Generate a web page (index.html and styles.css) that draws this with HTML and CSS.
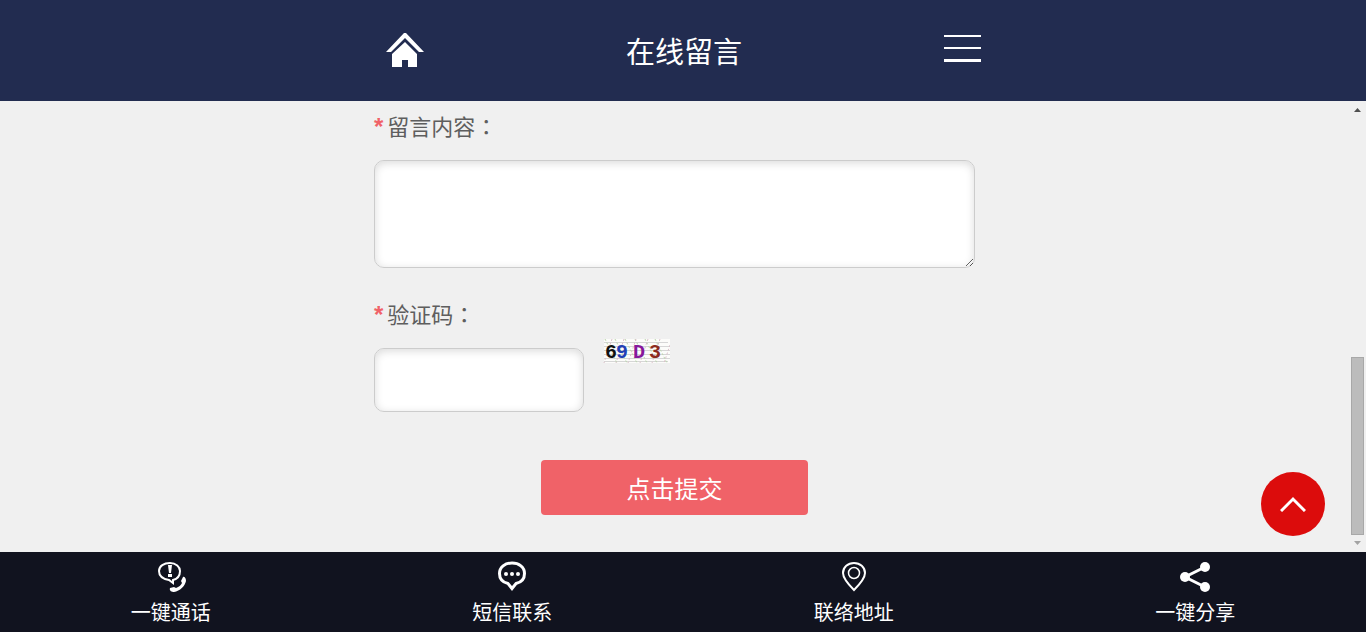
FILE: index.html
```html
<!DOCTYPE html>
<html lang="zh-CN">
<head>
    <meta charset="utf-8">
    <meta name="viewport" content="width=device-width, initial-scale=1">
    <title>在线留言</title>
    <link rel="stylesheet" href="styles.css">
</head>
<body>
    <header class="header">
        <div class="header-inner">
            <a class="header-icon" href="#" aria-label="首页">
                <svg width="38" height="36" viewBox="0 0 38 36" fill="#fff">
                    <path d="M18 0h2l18 19h-5L19 5 5 19H0z"/>
                    <path d="M19 9l12 12v13h-9v-7h-6v7H6V21z"/>
                </svg>
            </a>
            <h1>在线留言</h1>
            <button class="header-icon" type="button" aria-label="菜单">
                <svg width="37" height="36" viewBox="0 0 37 36" fill="#fff">
                    <path d="M0 2h37v2H0zM0 14h37v2H0zM0 26h37v3H0z"/>
                </svg>
            </button>
        </div>
    </header>

    <main class="main">
        <form class="form">
            <label for="content"><span class="required">*</span>留言内容<span class="colon" lang="zh-TW">：</span></label>
            <textarea id="content"></textarea>

            <label for="code"><span class="required">*</span>验证码<span class="colon" lang="zh-TW">：</span></label>
            <div class="code-row">
                <input type="text" id="code">
                <svg class="captcha" width="68" height="24" viewBox="0 0 68 24" role="img">
                    <rect x="2" width="66" height="24" fill="#fcfcfa"/>
                    <path d="M2 3.500h64M2 7.500h66M2 11.500h66M2 15.500h66M2 19.500h66M2 22.500h64" stroke="#d6d6d6"/>
                    <path d="M3 0l12 24M13 0l12 24M23 0l12 24M33 0l12 24M43 0l12 24M53 0l12 24" stroke="#b9d6ab" stroke-dasharray="2 2"/>
                    <path d="M10 0L2 24M22 0l-8 24M34 0l-8 24M46 0l-8 24M58 0l-8 24M68 6l-6 18" stroke="#dcc0ca" stroke-dasharray="2 2"/>
                    <text class="captcha-text" y="19"><tspan x="3" fill="#111">6</tspan><tspan x="14" fill="#2340b4">9</tspan><tspan x="31" fill="#86189c">D</tspan><tspan x="47" fill="#8c2a20">3</tspan></text>
                </svg>
            </div>

            <button class="submit" type="button">点击提交</button>
        </form>

        <div class="scrollbar" aria-hidden="true">
            <svg width="13" height="17" viewBox="0 0 13 17"><path d="M3 11h7L6.500 7z" fill="#505050"/></svg>
            <div class="thumb"></div>
            <svg width="13" height="17" viewBox="0 0 13 17"><path d="M3 6h7L6.500 10z" fill="#a3a3a3"/></svg>
        </div>
    </main>

    <a class="to-top" href="#" aria-label="返回顶部">
        <svg width="26" height="16" viewBox="0 0 26 16" fill="none" stroke="#fff" stroke-width="3">
            <path d="M1 15L13 3l12 12"/>
        </svg>
    </a>

    <nav class="footer">
        <a href="#">
            <svg width="30" height="32" viewBox="-2 0 30 32">
                <path d="M12 3c6 0 10 4 10 8 0 5-3 8-7 9v3l-4-3C5 19 1 16 1 11s5-8 11-8z" fill="none" stroke="#fff" stroke-width="2"/>
                <path d="M10 5h4l-1 8h-2zM10 14h4v3h-4z" fill="#fff"/>
                <path d="M25 17c2-1 3 2 3 4-1 5-6 10-12 11-2 0-5-1-4-4l4-1 2 1c3-1 5-3 6-5l-1-2z" fill="#fff"/>
            </svg>
            <span>一键通话</span>
        </a>
        <a href="#">
            <svg width="30" height="32" viewBox="0 0 30 32">
                <path d="M15 3c7 0 12.500 4 12.500 10.500 0 6-4 9-8.500 10l-4 5-4-5c-4.500-1-8.500-4-8.500-10C2.500 7 8 3 15 3z" fill="none" stroke="#fff" stroke-width="3"/>
                <g fill="#fff"><circle cx="9" cy="14" r="2"/><circle cx="15" cy="14" r="2"/><circle cx="21" cy="14" r="2"/></g>
            </svg>
            <span>短信联系</span>
        </a>
        <a href="#">
            <svg width="30" height="32" viewBox="0 0 30 32" fill="none" stroke="#fff">
                <path d="M15 3c6 0 11 4 11 10S19 26 15 30C11 26 4 19 4 13S9 3 15 3z" stroke-width="2"/>
                <circle cx="15" cy="13" r="5.500" stroke-width="1.500"/>
            </svg>
            <span>联络地址</span>
        </a>
        <a href="#">
            <svg width="32" height="32" viewBox="0 0 32 32" fill="#fff">
                <path d="M26 7L6 17l20 10" fill="none" stroke="#fff" stroke-width="3"/>
                <circle cx="6" cy="17" r="5"/><circle cx="26" cy="7" r="5"/><circle cx="26" cy="27" r="5"/>
            </svg>
            <span>一键分享</span>
        </a>
    </nav>
</body>
</html>
```

FILE: styles.css
```css
* {
    box-sizing: border-box;
}
body {
    display: flex;
    flex-direction: column;
    min-height: 100vh;
    margin: 0;
    background-color: #f0f0f0;
    color: #5e5e5e;
    font-family: "Noto Sans CJK SC", sans-serif;
}
a {
    color: #fff;
    text-decoration: none;
}
svg {
    display: block;
}
button {
    border: none;
    color: #fff;
    font-family: inherit;
    cursor: pointer;
}
.header {
    padding: 26px 0 25px;
    background-color: #222c50;
}
.header-inner {
    display: flex;
    align-items: center;
    justify-content: space-between;
    max-width: 640px;
    margin: 0 auto;
    padding: 0 22px 0 23px;
}
.header h1 {
    margin: 0;
    padding-bottom: 2px;
    color: #fff;
    font-size: 29px;
    font-weight: normal;
    line-height: 48px;
}
.header-icon {
    padding: 0;
    background: none;
}
.main {
    display: flex;
    flex: 1;
}
.form {
    width: 100%;
    max-width: 603px;
    margin: 0 auto;
    padding-right: 2px;
}
label {
    display: block;
    padding-bottom: 11px;
    font-size: 22px;
    line-height: 48px;
}
.required {
    margin-right: 4px;
    color: #f06268;
    font-family: "Liberation Sans", sans-serif;
    font-size: 24px;
    font-weight: bold;
    line-height: 1;
}
.colon {
    font-family: "Noto Sans CJK TC", sans-serif;
    line-height: 1;
}
textarea, input {
    display: block;
    border: 1px solid #ccc;
    border-radius: 10px;
    background-color: #fff;
    box-shadow: inset 0 2px 8px rgba(0,0,0,0.15);
    font-size: 22px;
}
textarea {
    width: 100%;
    height: 108px;
    margin-bottom: 21px;
    resize: vertical;
}
input {
    width: 210px;
    height: 64px;
}
.code-row {
    display: flex;
    gap: 18px;
}
.captcha {
    margin-top: -9px;
}
.captcha-text {
    font-family: "Liberation Mono", monospace;
    font-size: 20px;
    font-weight: bold;
}
.submit {
    display: block;
    width: 267px;
    height: 55px;
    margin: 48px auto 37px;
    border-radius: 4px;
    background-color: #f06268;
    font-size: 24px;
}
.scrollbar {
    display: flex;
    flex-direction: column;
    width: 15px;
}
.thumb {
    width: 13px;
    height: 178px;
    margin-top: auto;
    border: 1px solid #a8a8a8;
    background-color: #bcbcbc;
}
.to-top {
    position: fixed;
    right: 41px;
    bottom: 96px;
    display: flex;
    align-items: center;
    justify-content: center;
    width: 64px;
    height: 64px;
    border-radius: 50%;
    background-color: #dc0c0c;
}
.footer {
    display: flex;
    flex: none;
    height: 80px;
    background-color: #11131f;
}
.footer a {
    display: flex;
    flex: 1;
    flex-direction: column;
    align-items: center;
    padding-top: 8px;
    font-size: 20px;
    line-height: 40px;
}
```
